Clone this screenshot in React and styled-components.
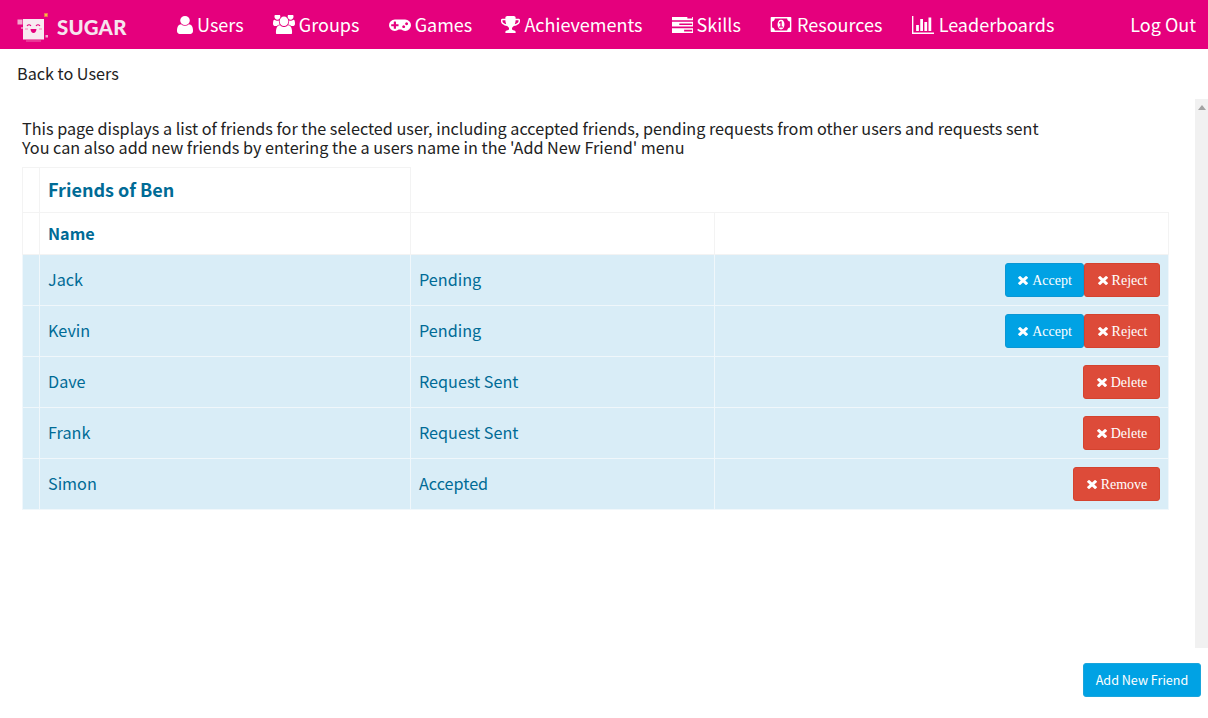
import React from "react";
import styled, { createGlobalStyle } from "styled-components";

const Global = createGlobalStyle`
  html, body { margin: 0; padding: 0; height: 100%; overflow: hidden; background: #fff; }
  body { font-family: "Noto Sans CJK SC", "Noto Sans", sans-serif; color: #222; }
`;

const P = {
  user: { vb: "256 128 1280 1536", d: "M1536 1399q0 109-62.5 187t-150.5 78h-854q-88 0-150.5-78t-62.5-187q0-85 8.5-160.5t31.5-152 58.5-131 94-89 134.5-34.5q131 128 313 128t313-128q76 0 134.5 34.5t94 89 58.5 131 31.5 152 8.5 160.5zm-256-887q0 159-112.5 271.5t-271.5 112.5-271.5-112.5-112.5-271.5 112.5-271.5 271.5-112.5 271.5 112.5 112.5 271.5z" },
  users: { vb: "0 128 1920 1536", d: "M593 896q-162 5-265 128h-134q-82 0-138-40.5t-56-118.5q0-353 124-353 6 0 43.5 21t97.5 42.5 119 21.5q67 0 133-23-5 37-5 66 0 139 81 256zm1071 637q0 120-73 189.5t-194 69.5h-874q-121 0-194-69.5t-73-189.5q0-53 3.5-103.5t14-109 26.5-108.5 43-97.5 62-81 85.5-53.5 111.5-20q10 0 43 21.5t73 48 107 48 135 21.5 135-21.5 107-48 73-48 43-21.5q61 0 111.5 20t85.5 53.5 62 81 43 97.5 26.5 108.5 14 109 3.5 103.5zm-1024-1277q0 106-75 181t-181 75-181-75-75-181 75-181 181-75 181 75 75 181zm704 384q0 159-112.5 271.5t-271.5 112.5-271.5-112.5-112.5-271.5 112.5-271.5 271.5-112.5 271.5 112.5 112.5 271.5zm576 225q0 78-56 118.5t-138 40.5h-134q-103-123-265-128 81-117 81-256 0-29-5-66 66 23 133 23 59 0 119-21.5t97.5-42.5 43.5-21q124 0 124 353zm-128-609q0 106-75 181t-181 75-181-75-75-181 75-181 181-75 181 75 75 181z" },
  gamepad: { vb: "0 320 1920 1152", d: "M832 1024v-128q0-14-9-23t-23-9h-192v-192q0-14-9-23t-23-9h-128q-14 0-23 9t-9 23v192h-192q-14 0-23 9t-9 23v128q0 14 9 23t23 9h192v192q0 14 9 23t23 9h128q14 0 23-9t9-23v-192h192q14 0 23-9t9-23zm576 64q0-53-37.5-90.5t-90.5-37.5-90.5 37.5-37.5 90.5 37.5 90.5 90.5 37.5 90.5-37.5 37.5-90.5zm256-256q0-53-37.5-90.5t-90.5-37.5-90.5 37.5-37.5 90.5 37.5 90.5 90.5 37.5 90.5-37.5 37.5-90.5zm256 128q0 212-150 362t-362 150q-192 0-338-128h-220q-146 128-338 128-212 0-362-150t-150-362 150-362 362-150h896q212 0 362 150t150 362z" },
  trophy: { vb: "64 128 1664 1536", d: "M522 883q-74-162-74-371h-256v96q0 78 94.5 162t235.5 113zm1078-275v-96h-256q0 209-74 371 141-29 235.5-113t94.5-162zm128-128v128q0 71-41.5 143t-112 130-173 97.5-215.5 44.5q-42 54-95 95-38 34-52.5 72.5t-14.5 89.5q0 54 30.5 91t97.5 37q75 0 133.5 45.5t58.5 114.5v64q0 14-9 23t-23 9h-832q-14 0-23-9t-9-23v-64q0-69 58.5-114.5t133.5-45.5q67 0 97.5-37t30.5-91q0-51-14.5-89.5t-52.5-72.5q-53-41-95-95-113-5-215.5-44.5t-173-97.5-112-130-41.5-143v-128q0-40 28-68t68-28h288v-96q0-66 47-113t113-47h576q66 0 113 47t47 113v96h288q40 0 68 28t28 68z" },
  tasks: { vb: "64 256 1664 1280", d: "M1024 1408h640v-128h-640v128zm-384-512h1024v-128h-1024v128zm640-512h384v-128h-384v128zm512 832v256q0 26-19 45t-45 19h-1664q-26 0-45-19t-19-45v-256q0-26 19-45t45-19h1664q26 0 45 19t19 45zm0-512v256q0 26-19 45t-45 19h-1664q-26 0-45-19t-19-45v-256q0-26 19-45t45-19h1664q26 0 45 19t19 45zm0-512v256q0 26-19 45t-45 19h-1664q-26 0-45-19t-19-45v-256q0-26 19-45t45-19h1664q26 0 45 19t19 45z" },
  money: { vb: "0 256 2048 1280", d: "M832 1152h384v-96h-128v-448h-114l-148 137 77 80 63-58v289h-134v96zm512-256q0 70-21 142t-59.5 134-101.5 101-138 39-138-39-101.5-101-59.5-134-21-142 21-142 59.5-134 101.5-101 138-39 138 39 101.5 101 59.5 134 21 142zm512 256v-512q-106 0-181-75t-75-181h-1152q0 106-75 181t-181 75v512q106 0 181 75t75 181h1152q0-106 75-181t181-75zm128-832v1152q0 26-19 45t-45 19h-1792q-26 0-45-19t-19-45v-1152q0-26 19-45t45-19h1792q26 0 45 19t19 45z" },
  chart: { vb: "0 128 2048 1536", d: "M640 896v512h-256v-512h256zm384-512v1024h-256v-1024h256zm1024 1152v128h-2048v-1536h128v1408h1920zm-640-896v768h-256v-768h256zm384-384v1152h-256v-1152h256z" },
  times: { vb: "174 238 1316 1316", d: "M1490 1322q0 40-28 68l-136 136q-28 28-68 28t-68-28l-294-294-294 294q-28 28-68 28t-68-28l-136-136q-28-28-28-68t28-68l294-294-294-294q-28-28-28-68t28-68l136-136q28-28 68-28t68 28l294 294 294-294q28-28 68-28t68 28l136 136q28 28 28 68t-28 68l-294 294 294 294q28 28 28 68z" },
};

const Svg = styled.svg`
  width: ${(p) => p.$w}px;
  height: ${(p) => p.$h}px;
  fill: currentColor;
  flex: none;
  display: block;
`;

const Icon = ({ name, w, h }) => (
  <Svg viewBox={P[name].vb} $w={w} $h={h} preserveAspectRatio="none">
    <path d={P[name].d} />
  </Svg>
);

const Page = styled.div`
  height: 718px;
  display: flex;
  flex-direction: column;
`;

const Nav = styled.nav`
  height: 49px;
  flex: none;
  background: #e5007d;
  color: #fff;
  display: flex;
  align-items: center;
  padding: 0 12px 0 17px;
  font-size: 18px;
  line-height: 47px;
`;

const Logo = styled.div`
  display: flex;
  align-items: center;
  width: 160px;
  flex: none;
`;

const LogoWord = styled.span`
  font-family: "Lato", sans-serif;
  font-weight: 900;
  font-size: 20.4px;
  line-height: 49px;
  letter-spacing: 0.2px;
  color: #f6e4ee;
  padding-top: 5px;
`;

const NavItem = styled.a`
  display: flex;
  align-items: center;
  gap: ${(p) => p.$gap}px;
  margin-right: 29.2px;
  white-space: nowrap;
`;

const LogOut = styled.a`
  margin-left: auto;
  white-space: nowrap;
`;

const BackRow = styled.div`
  height: 50px;
  flex: none;
  padding-left: 17px;
  font-size: 16.2px;
  line-height: 49px;
  color: #222;
`;

const Body = styled.div`
  flex: 1;
  min-height: 0;
  display: flex;
`;

const Scroll = styled.main`
  flex: 1;
  min-width: 0;
  padding: 20px 26px 0 22px;
`;

const Track = styled.div`
  width: 13px;
  flex: none;
  background: #f1f1f1;
  display: flex;
  justify-content: center;
  padding-top: 6px;
  box-sizing: border-box;
`;

const Arrow = styled.div`
  width: 0;
  height: 0;
  border-left: 4px solid transparent;
  border-right: 4px solid transparent;
  border-bottom: 5px solid #a3a3a3;
`;

const Intro = styled.p`
  margin: 0 0 10px;
  font-size: 16.2px;
  line-height: 19px;
  color: #222;
`;

const Table = styled.table`
  width: 1146px;
  table-layout: fixed;
  border-collapse: collapse;
`;

const Col = styled.col`
  width: ${(p) => p.$w}px;
`;

const Cell = styled.td`
  border: 1px solid #f3f3f3;
  padding: 0 8px;
  height: ${(p) => p.$h}px;
  box-sizing: border-box;
  color: #006b96;
  font-size: 16.2px;
  line-height: 24px;
  text-align: left;
  white-space: nowrap;
`;

const TextCell = styled(Cell)`
  padding-bottom: 2px;
`;

const TitleCell = styled(TextCell)`
  font-size: 18px;
  font-weight: 700;
`;

const HeadCell = styled(TextCell)`
  font-weight: 700;
`;

const InfoRow = styled.tr`
  background: #d9edf7;
  & > td { border-color: #f0f7fb; }
`;

const Actions = styled.div`
  display: flex;
  justify-content: flex-end;
`;

const Btn = styled.button`
  height: 34px;
  box-sizing: border-box;
  border: 1px solid ${(p) => (p.$kind === "accept" ? "#0b97d4" : "#d4432f")};
  background: ${(p) => (p.$kind === "accept" ? "#00a2e4" : "#dd4b39")};
  color: #fff;
  border-radius: 3px;
  padding: 0;
  width: ${(p) => p.$w}px;
  font-family: "Liberation Serif", serif;
  font-size: 14px;
  display: inline-flex;
  align-items: center;
  justify-content: center;
  gap: 4px;
`;

const BtnLabel = styled.span`
  padding-top: 2px;
`;

const Footer = styled.footer`
  height: 70px;
  flex: none;
  display: flex;
  justify-content: flex-end;
  align-items: flex-start;
  padding: 15px 7px 0 0;
  box-sizing: border-box;
`;

const AddBtn = styled.button`
  width: 118px;
  height: 34px;
  border: 1px solid #1aa5dc;
  background: #00a2e4;
  color: #fff;
  border-radius: 3px;
  font-family: "Noto Sans CJK SC", "Noto Sans", sans-serif;
  font-size: 12.6px;
  padding: 0 0 2px;
`;

const LogoMark = () => (
  <svg width="40" height="36" viewBox="0 0 40 36">
    <rect x="0.5" y="12.5" width="5" height="5" fill="#f4a6cd" />
    <rect x="4" y="20" width="2" height="2" fill="#ee75b3" />
    <rect x="6" y="12" width="21" height="20.5" fill="#f8eaf1" />
    <rect x="28.5" y="28" width="2.5" height="2.5" fill="#f4a6cd" />
    <path d="M9 34h15" stroke="#ee6cb0" strokeWidth="1" />
    <path d="M27.5 6.5l3 3m0-3l-3 3" stroke="#f6c33b" strokeWidth="1.6" />
    <path d="M10 19q2-2.5 4 0M19 19q2-2.5 4 0" stroke="#e5007d" strokeWidth="1.2" fill="none" />
    <path d="M13.5 22h6q-.5 4-3 4t-3-4z" fill="#e5007d" />
    <rect x="8" y="21" width="3" height="2" fill="#f7b6d6" />
    <rect x="22" y="21" width="3" height="2" fill="#f7b6d6" />
  </svg>
);

const navItems = [
  ["user", 16, 18, "Users", 4],
  ["users", 22, 19, "Groups", 4],
  ["gamepad", 22, 13, "Games", 4],
  ["trophy", 19, 17, "Achievements", 4],
  ["tasks", 21, 16, "Skills", 4],
  ["money", 22, 15, "Resources", 5],
  ["chart", 22, 18, "Leaderboards", 5],
];

const rows = [
  ["Jack", "Pending", [["accept", "Accept", 79], ["reject", "Reject", 76]]],
  ["Kevin", "Pending", [["accept", "Accept", 79], ["reject", "Reject", 76]]],
  ["Dave", "Request Sent", [["reject", "Delete", 77]]],
  ["Frank", "Request Sent", [["reject", "Delete", 77]]],
  ["Simon", "Accepted", [["reject", "Remove", 87]]],
];

export default function App() {
  return (
    <Page>
      <Global />
      <Nav>
        <Logo>
          <LogoMark />
          <LogoWord>SUGAR</LogoWord>
        </Logo>
        {navItems.map(([icon, w, h, label, gap]) => (
          <NavItem key={label} $gap={gap}>
            <Icon name={icon} w={w} h={h} />
            {label}
          </NavItem>
        ))}
        <LogOut>Log Out</LogOut>
      </Nav>
      <BackRow>Back to Users</BackRow>
      <Body>
        <Scroll>
          <Intro>
            This page displays a list of friends for the selected user, including accepted friends, pending requests from other users and requests sent
            <br />
            You can also add new friends by entering the a users name in the 'Add New Friend' menu
          </Intro>
          <Table>
            <colgroup>
              <Col $w={17} />
              <Col $w={371} />
              <Col $w={304} />
              <Col $w={454} />
            </colgroup>
            <tbody>
              <tr>
                <Cell $h={45} />
                <TitleCell $h={45}>Friends of Ben</TitleCell>
              </tr>
              <tr>
                <Cell $h={42} />
                <HeadCell $h={42}>Name</HeadCell>
                <Cell $h={42} />
                <Cell $h={42} />
              </tr>
              {rows.map(([name, status, btns]) => (
                <InfoRow key={name}>
                  <Cell $h={51} />
                  <TextCell $h={51}>{name}</TextCell>
                  <TextCell $h={51}>{status}</TextCell>
                  <Cell $h={51}>
                    <Actions>
                      {btns.map(([kind, label, w]) => (
                        <Btn key={label} $kind={kind} $w={w}>
                          <Icon name="times" w={11} h={10} />
                          <BtnLabel>{label}</BtnLabel>
                        </Btn>
                      ))}
                    </Actions>
                  </Cell>
                </InfoRow>
              ))}
            </tbody>
          </Table>
        </Scroll>
        <Track>
          <Arrow />
        </Track>
      </Body>
      <Footer>
        <AddBtn>Add New Friend</AddBtn>
      </Footer>
    </Page>
  );
}
